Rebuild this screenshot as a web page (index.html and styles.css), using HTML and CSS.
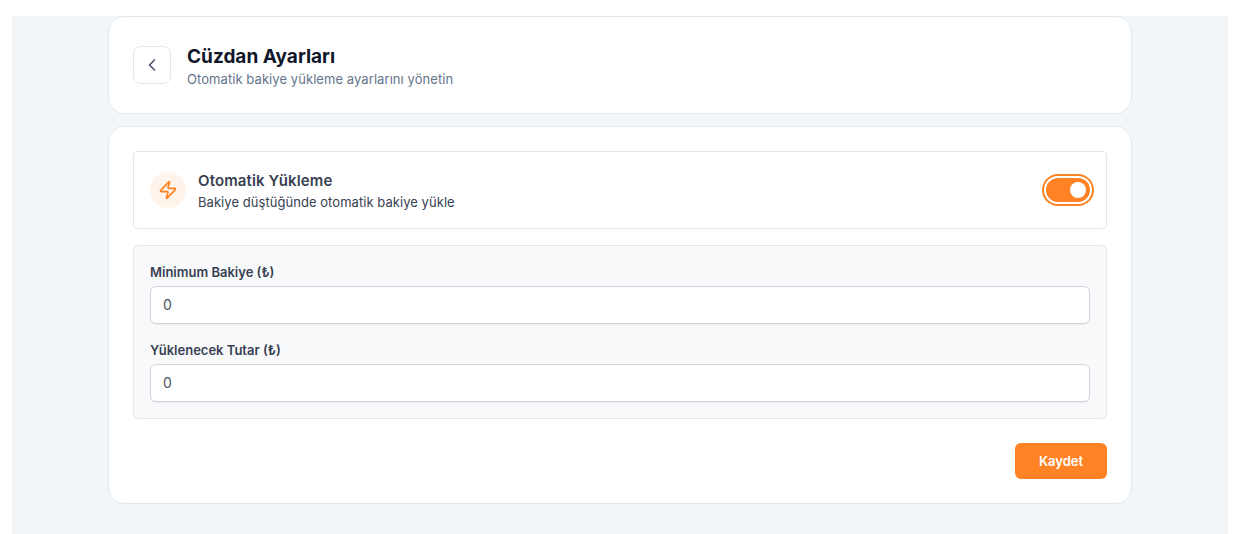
FILE: index.html
```html
<!DOCTYPE html>
<html lang="tr">
<head>
<meta charset="utf-8">
<title>Cüzdan Ayarları</title>
<link rel="stylesheet" href="styles.css">
</head>
<body>
<main class="main">
  <div class="stack">
    <section class="card header-card">
      <button class="back" type="button" aria-label="Geri">
        <svg width="20" height="20" viewBox="0 0 24 24" fill="none" stroke="currentColor" stroke-width="2" stroke-linecap="round" stroke-linejoin="round"><path d="m15 18-6-6 6-6"/></svg>
      </button>
      <div class="heading">
        <h1>Cüzdan Ayarları</h1>
        <p>Otomatik bakiye yükleme ayarlarını yönetin</p>
      </div>
    </section>
    <section class="card form-card">
      <div class="auto-row">
        <div class="auto-info">
          <span class="zap">
            <svg width="20" height="20" viewBox="0 0 24 24" fill="none" stroke="currentColor" stroke-width="2" stroke-linecap="round" stroke-linejoin="round"><path d="M4 14a1 1 0 0 1-.78-1.63l9.9-10.2a.5.5 0 0 1 .86.46l-1.92 6.02A1 1 0 0 0 13 10h7a1 1 0 0 1 .78 1.63l-9.9 10.2a.5.5 0 0 1-.86-.46l1.92-6.02A1 1 0 0 0 11 14z"/></svg>
          </span>
          <div class="auto-text">
            <h2>Otomatik Yükleme</h2>
            <p>Bakiye düştüğünde otomatik bakiye yükle</p>
          </div>
        </div>
        <span class="toggle"><span class="knob"></span></span>
      </div>
      <div class="panel">
        <label class="field">
          <span class="label">Minimum Bakiye (₺)</span>
          <input class="input" type="text" value="0">
        </label>
        <label class="field">
          <span class="label">Yüklenecek Tutar (₺)</span>
          <input class="input" type="text" value="0">
        </label>
      </div>
      <div class="actions">
        <button class="save" type="button">Kaydet</button>
      </div>
    </section>
  </div>
</main>
</body>
</html>
```
FILE: styles.css
```css
* { box-sizing: border-box; }
html, body { margin: 0; height: 100%; background: #fff; }
body {
  padding: 16px 16px 0 12px;
  font-family: Inter, "Noto Sans", sans-serif;
  color: #374151;
}
.main {
  background: #f2f6f9;
  height: 518px;
  display: flex;
  justify-content: center;
}
.stack {
  width: 1024px;
  display: flex;
  flex-direction: column;
  gap: 12px;
}
.card {
  background: #fff;
  border: 1px solid #e2e8f0;
  border-radius: 16px;
  padding: 24px;
}
.header-card {
  display: flex;
  align-items: center;
  gap: 16px;
  height: 98px;
}
.back {
  width: 38px;
  height: 38px;
  padding: 0;
  display: flex;
  align-items: center;
  justify-content: center;
  background: #fff;
  border: 1px solid #e2e8f0;
  border-radius: 8px;
  color: #475569;
}
.heading {
  padding-top: 1px;
}
.heading h1 {
  margin: 0;
  font-size: 19px;
  line-height: 28px;
  font-weight: 700;
  color: #0f172a;
}
.heading p {
  margin: 0;
  font-size: 13px;
  line-height: 17px;
  letter-spacing: 0.07px;
  color: #64748b;
}
.auto-row {
  height: 78px;
  display: flex;
  align-items: center;
  justify-content: space-between;
  padding: 0 16px;
  border: 1px solid #e5e7eb;
  border-radius: 4px;
}
.auto-info {
  display: flex;
  align-items: center;
  gap: 12px;
}
.zap {
  width: 36px;
  height: 36px;
  border-radius: 50%;
  background: #fff4eb;
  color: #ff8324;
  display: flex;
  align-items: center;
  justify-content: center;
}
.auto-text {
  padding-top: 3px;
}
.auto-text h2 {
  margin: 0;
  font-size: 15px;
  line-height: 22px;
  font-weight: 600;
  letter-spacing: 0.12px;
  color: #374151;
}
.auto-text p {
  margin: 0;
  font-size: 13px;
  line-height: 21px;
  letter-spacing: 0.05px;
  color: #374151;
}
.toggle {
  width: 44px;
  height: 24px;
  border-radius: 12px;
  background: #ff8324;
  box-shadow: 0 0 0 2px #fff, 0 0 0 4px #ff8324;
  display: flex;
  align-items: center;
  justify-content: flex-end;
  padding-right: 4px;
}
.knob {
  width: 16px;
  height: 16px;
  border-radius: 50%;
  background: #fff;
}
.panel {
  margin-top: 16px;
  padding: 16px;
  background: #f8f9fb;
  border: 1px solid #e5e7eb;
  border-radius: 4px;
  display: flex;
  flex-direction: column;
  gap: 16px;
}
.field {
  display: flex;
  flex-direction: column;
  gap: 4px;
}
.label {
  font-size: 13px;
  line-height: 20px;
  font-weight: 600;
  color: #374151;
}
.input {
  height: 38px;
  padding: 0 12px 1px;
  font: 14px Inter, "Noto Sans", sans-serif;
  color: #4b5563;
  background: #fff;
  border: 1px solid #d1d5db;
  border-radius: 6px;
  box-shadow: 0 1px 2px rgba(0, 0, 0, 0.05);
}
.actions {
  margin-top: 24px;
  display: flex;
  justify-content: flex-end;
}
.save {
  width: 92px;
  height: 36px;
  border: 0;
  border-radius: 6px;
  background: #ff8324;
  color: #fff;
  font: 600 13px Inter, "Noto Sans", sans-serif;
}
```
